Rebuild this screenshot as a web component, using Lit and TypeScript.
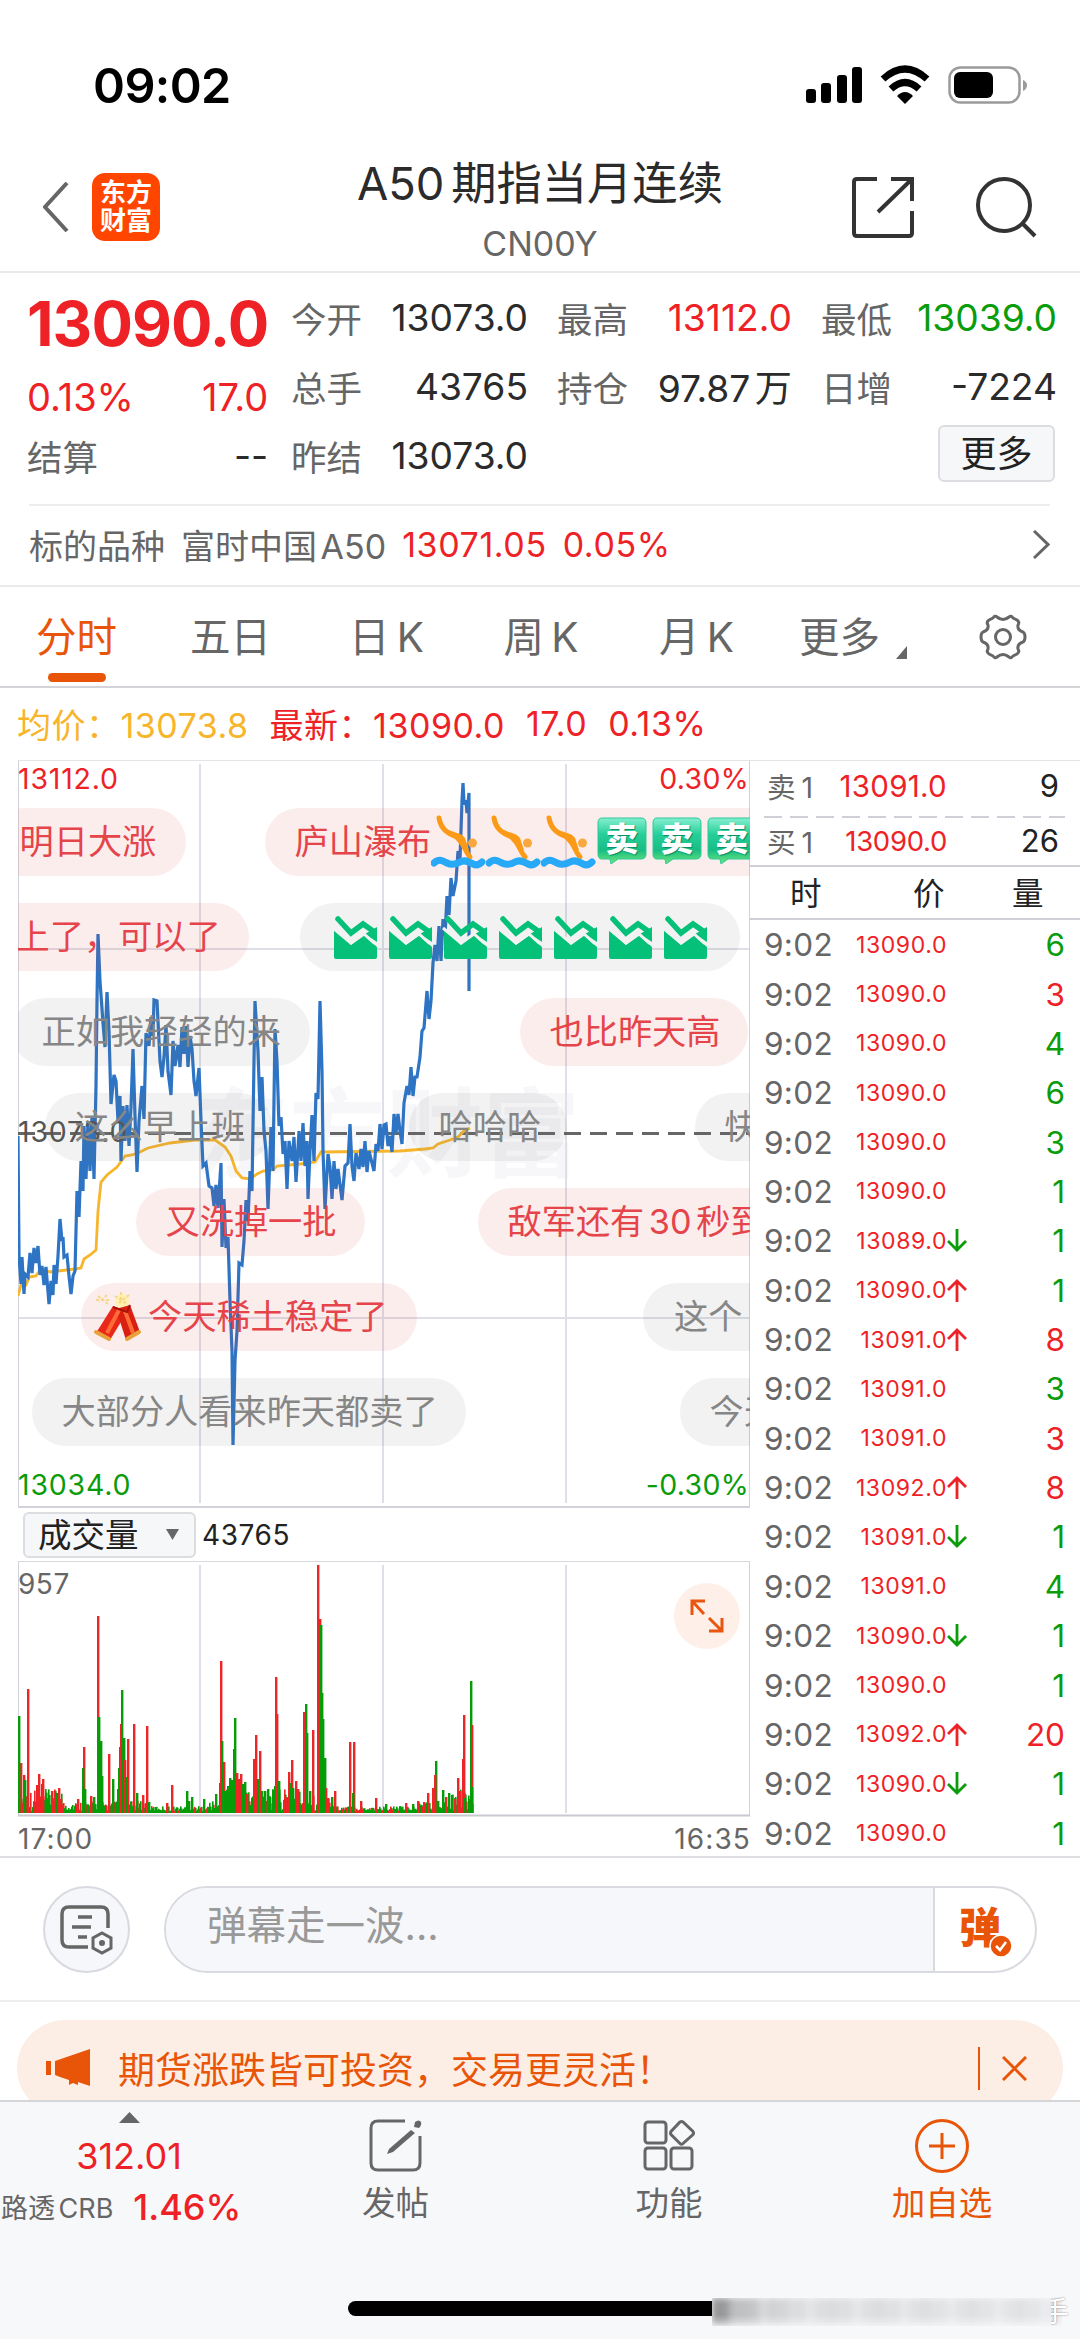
import { LitElement, html, svg, css } from "lit";
import { customElement, property } from "lit/decorators.js";
import { classMap } from "lit/directives/class-map.js";
import { styleMap } from "lit/directives/style-map.js";

type Point = [number, number];

interface Tick {
  price: string;
  volume: number;
  up: boolean;
  arrow?: "up" | "down";
}

interface Bubble {
  left: number;
  lane: number;
  text: string;
  tone: "red" | "gray";
  width?: number;
  pad?: number;
  before?: string[];
  after?: string[];
}

const TICKS: Tick[] = [
  { price: "13090.0", volume: 6, up: false },
  { price: "13090.0", volume: 3, up: true },
  { price: "13090.0", volume: 4, up: false },
  { price: "13090.0", volume: 6, up: false },
  { price: "13090.0", volume: 3, up: false },
  { price: "13090.0", volume: 1, up: false },
  { price: "13089.0", volume: 1, up: false, arrow: "down" },
  { price: "13090.0", volume: 1, up: false, arrow: "up" },
  { price: "13091.0", volume: 8, up: true, arrow: "up" },
  { price: "13091.0", volume: 3, up: false },
  { price: "13091.0", volume: 3, up: true },
  { price: "13092.0", volume: 8, up: true, arrow: "up" },
  { price: "13091.0", volume: 1, up: false, arrow: "down" },
  { price: "13091.0", volume: 4, up: false },
  { price: "13090.0", volume: 1, up: false, arrow: "down" },
  { price: "13090.0", volume: 1, up: false },
  { price: "13092.0", volume: 20, up: true, arrow: "up" },
  { price: "13090.0", volume: 1, up: false, arrow: "down" },
  { price: "13090.0", volume: 1, up: false },
];

// left is measured from the chart's left edge, lane counts from the top
const BUBBLES: Bubble[] = [
  { left: -28, lane: 0, text: "明日大涨", tone: "red", width: 196 },
  {
    left: 247,
    lane: 0,
    text: "庐山瀑布",
    tone: "red",
    after: ["dive", "dive", "dive", "sell", "sell", "sell"],
  },
  { left: -32, lane: 1, text: "上了，可以了", tone: "red", width: 263 },
  {
    left: 282,
    lane: 1,
    text: "",
    tone: "gray",
    width: 440,
    before: ["fall", "fall", "fall", "fall", "fall", "fall", "fall"],
  },
  { left: -6, lane: 2, text: "正如我轻轻的来", tone: "gray", width: 298 },
  { left: 502, lane: 2, text: "也比昨天高", tone: "red", width: 228 },
  { left: 27, lane: 3, text: "这么早上班", tone: "gray", width: 228 },
  { left: 391, lane: 3, text: "哈哈哈", tone: "gray", width: 158 },
  { left: 677, lane: 3, text: "快", tone: "gray", width: 158 },
  { left: 118, lane: 4, text: "又洗掉一批", tone: "red", width: 229 },
  { left: 460, lane: 4, text: "敌军还有 30 秒到", tone: "red" },
  {
    left: 63,
    lane: 5,
    text: "今天稀土稳定了",
    tone: "red",
    width: 336,
    pad: 12,
    before: ["cracker"],
  },
  { left: 625, lane: 5, text: "这个", tone: "gray", width: 200, pad: 31 },
  { left: 14, lane: 6, text: "大部分人看来昨天都卖了", tone: "gray", width: 434 },
  { left: 662, lane: 6, text: "今天", tone: "gray", width: 200 },
];

const PRICE: Point[] = [
  [18, 1135], [19, 1255], [21, 1283], [22, 1256], [24, 1293], [25, 1273],
  [28, 1276], [30, 1252], [32, 1272], [34, 1247], [36, 1262], [38, 1245],
  [40, 1274], [42, 1265], [44, 1284], [46, 1266], [49, 1303], [51, 1280],
  [53, 1294], [54, 1264], [56, 1283], [58, 1255], [60, 1218], [62, 1240],
  [63, 1236], [64, 1256], [67, 1254], [69, 1275], [71, 1293], [73, 1275],
  [75, 1270], [77, 1190], [79, 1216], [81, 1160], [83, 1190], [84, 1125],
  [86, 1178], [88, 1120], [90, 1170], [92, 1115], [94, 1178], [96, 1085],
  [97, 1000], [98, 933], [100, 980], [103, 1022], [105, 1046], [107, 991],
  [109, 1030], [111, 1103], [114, 1074], [116, 1080], [118, 1120], [120, 1095],
  [121, 1160], [123, 1105], [125, 1140], [127, 1104], [129, 1145], [131, 1106],
  [133, 1048], [135, 1115], [137, 1171], [139, 1120], [142, 1085], [144, 1118],
  [146, 1032], [149, 1045], [151, 1016], [153, 1035], [154, 999], [157, 1000],
  [160, 1060], [162, 1076], [164, 1056], [166, 1024], [168, 1070], [171, 1094],
  [173, 1040], [175, 1065], [178, 1044], [180, 1066], [182, 1026], [184, 1053],
  [186, 1025], [188, 1066], [190, 1035], [192, 1048], [194, 1080], [196, 1095],
  [199, 1067], [201, 1120], [203, 1165], [206, 1162], [209, 1185], [212, 1187],
  [214, 1205], [216, 1184], [218, 1207], [221, 1162], [222, 1246], [224, 1198],
  [226, 1247], [228, 1236], [230, 1300], [232, 1350], [233, 1444], [235, 1360],
  [237, 1330], [239, 1262], [242, 1264], [244, 1240], [246, 1199], [248, 1220],
  [250, 1170], [252, 1190], [254, 1060], [255, 1000], [258, 1050], [260, 1110],
  [262, 1076], [264, 1130], [266, 1150], [268, 1208], [271, 1126], [273, 1170],
  [275, 1028], [277, 1060], [279, 1125], [281, 1116], [283, 1153], [285, 1140],
  [287, 1188], [289, 1140], [292, 1160], [294, 1136], [296, 1181], [299, 1130],
  [301, 1160], [303, 1122], [305, 1165], [307, 1140], [308, 1198], [310, 1150],
  [312, 1114], [314, 1160], [316, 1092], [318, 1098], [320, 1000], [322, 1070],
  [323, 1150], [325, 1208], [328, 1153], [330, 1166], [332, 1198], [334, 1160],
  [336, 1188], [338, 1168], [342, 1199], [345, 1165], [348, 1162], [350, 1123],
  [352, 1165], [354, 1180], [356, 1152], [359, 1168], [361, 1148], [363, 1166],
  [365, 1140], [367, 1171], [369, 1150], [372, 1162], [374, 1170], [376, 1143],
  [378, 1150], [380, 1123], [382, 1148], [384, 1124], [386, 1123], [388, 1145],
  [390, 1135], [392, 1151], [394, 1113], [396, 1132], [398, 1113], [400, 1130],
  [402, 1143], [404, 1102], [407, 1085], [409, 1094], [411, 1066], [413, 1095],
  [415, 1076], [417, 1076], [420, 1056], [422, 1030], [424, 1027], [427, 990],
  [429, 1018], [431, 1000], [433, 962], [435, 944], [437, 960], [439, 925],
  [441, 960], [443, 918], [445, 935], [447, 895], [449, 914], [451, 877],
  [453, 895], [456, 880], [458, 850], [460, 858], [462, 800], [463, 782],
  [464, 802], [466, 801], [467, 812], [469, 792], [469, 990],
];

const AVERAGE: Point[] = [
  [18, 1295], [21, 1284], [26, 1284], [29, 1276], [36, 1275], [40, 1269],
  [45, 1269], [50, 1271], [58, 1270], [75, 1268], [81, 1267], [84, 1258],
  [90, 1254], [96, 1249], [98, 1210], [101, 1181], [107, 1174], [117, 1166],
  [125, 1155], [132, 1154], [140, 1151], [148, 1147], [170, 1142], [195, 1139],
  [215, 1139], [225, 1146], [231, 1155], [236, 1170], [242, 1177], [250, 1178],
  [257, 1173], [263, 1170], [273, 1169], [277, 1165], [300, 1163], [315, 1161],
  [321, 1151], [400, 1150], [425, 1148], [433, 1147], [438, 1143], [450, 1139],
  [458, 1136], [464, 1130], [470, 1127],
];

// x, height, rising
const VOLUMES: [number, number, boolean][] = [
  [21, 50, true], [24, 38, true], [25, 33, false], [28, 124, true],
  [37, 28, true], [39, 39, true], [42, 29, false], [43, 34, true],
  [52, 22, true], [57, 20, false], [59, 25, true], [61, 14, true],
  [78, 14, true], [84, 66, true], [83, 45, false], [85, 24, false],
  [91, 17, true], [94, 16, false], [98, 197, true], [99, 96, false],
  [101, 72, false], [102, 37, false], [109, 59, true], [113, 34, false],
  [118, 24, false], [119, 45, false], [120, 66, false], [121, 89, true],
  [122, 123, false], [124, 75, false], [125, 53, true], [126, 36, false],
  [128, 74, true], [134, 89, true], [137, 20, false], [143, 18, true],
  [147, 87, true], [149, 11, false], [167, 10, true], [172, 28, true],
  [187, 22, false], [189, 12, false], [192, 16, false], [204, 14, false],
  [216, 19, false], [220, 30, false], [221, 152, true], [222, 72, false],
  [224, 51, true], [225, 22, false], [228, 27, false], [230, 35, false],
  [232, 33, false], [234, 64, false], [235, 95, false], [236, 38, false],
  [237, 40, true], [239, 34, true], [241, 39, true], [243, 29, false],
  [245, 31, false], [247, 19, true], [254, 54, true], [256, 78, true],
  [258, 34, false], [260, 62, true], [262, 22, false], [265, 22, false],
  [268, 24, false], [270, 16, false], [275, 27, false], [276, 136, true],
  [277, 99, true], [279, 32, false], [289, 41, true], [290, 30, false],
  [292, 53, true], [293, 25, false], [296, 32, true], [298, 24, true],
  [304, 101, true], [306, 109, false], [307, 80, false], [310, 22, false],
  [313, 83, true], [318, 248, true], [320, 194, true], [321, 188, false],
  [322, 120, false], [323, 94, false], [325, 55, false], [326, 25, true],
  [328, 15, true], [332, 16, false], [335, 22, true], [350, 71, true],
  [354, 71, true], [353, 20, false], [361, 12, true], [376, 15, true],
  [386, 9, false], [406, 10, true], [413, 9, false], [418, 12, true],
  [424, 11, true], [428, 20, true], [433, 25, true], [436, 52, false],
  [435, 38, true], [438, 12, false], [443, 23, false], [446, 16, true],
  [449, 20, false], [452, 18, false], [455, 14, true], [458, 35, true],
  [460, 22, true], [463, 54, true], [464, 98, true], [465, 15, false],
  [471, 132, false], [472, 88, true], [472, 26, false], [19, 97, false],
];

const toPath = (points: Point[]) =>
  points.map(([x, y]) => `${x - 18},${y - 760}`).join(" ");

@customElement("emote-icon")
export class EmoteIcon extends LitElement {
  static styles = css`
    :host {
      display: block;
      width: 55px;
      height: 55px;
    }

    svg {
      display: block;
    }

    .sell {
      position: relative;
      width: 49px;
      height: 47px;
      margin: 2px 0 0 1px;
    }

    .sell span {
      position: absolute;
      inset: 0 0 6px;
      color: white;
      font: 900 33px/40px "Noto Sans CJK SC", sans-serif;
      text-align: center;
      text-shadow: 1px 1px 1px #078b63;
    }
  `;

  @property()
  name = "";

  render() {
    switch (this.name) {
      case "dive":
        return html`<svg width="55" height="55" viewBox="0 0 55 55">
          <path
            d="M8 3C10 15 18 19 26 22C33 28 33 35 39 42"
            fill="none"
            stroke="#fb9a17"
            stroke-width="5"
            stroke-linecap="round"
          />
          <path d="M14 13C21 18 30 17 34 23L38 35L34 35L25 25Z" fill="#fb9a17" />
          <circle cx="41.500" cy="28" r="4.500" fill="#f9a840" />
          <path
            d="M3 48C8 43 12 46 16 48S24 50 29 47S38 47 42 49S49 49 51 47"
            fill="none"
            stroke="#28a9f8"
            stroke-width="7"
            stroke-linecap="round"
          />
        </svg>`;
      case "sell":
        return html`<div class="sell">
          <svg width="50" height="49" viewBox="0 0 50 49">
            <defs>
              <linearGradient id="g" x1="0" y1="0" x2="0" y2="1">
                <stop offset="0" stop-color="#86efd0" />
                <stop offset=".35" stop-color="#27cf98" />
                <stop offset=".7" stop-color="#18bd84" />
                <stop offset="1" stop-color="#70e878" />
              </linearGradient>
            </defs>
            <path
              d="M5 1H44Q49 1 49 6V37Q49 42 44 42H21L14 47L13 42H5Q1 42 1 37V6Q1 1 5 1Z"
              fill="url(#g)"
              stroke="#2ac99a"
            />
          </svg>
          <span>卖</span>
        </div>`;
      case "fall":
        return html`<svg width="55" height="55" viewBox="0 0 55 55">
          <path
            d="M4 19L21 35L34 25L47 37V47Q47 49 45 49H6Q4 49 4 47Z"
            fill="#05c078"
          />
          <path
            d="M8 9L21 23L33 14L43 21"
            fill="none"
            stroke="#05c078"
            stroke-width="5.500"
            stroke-linecap="round"
          />
          <path d="M47 17V32L35 24Z" fill="#05c078" />
          <path
            d="M3 18L21 33L34 24L44 33L48 34"
            fill="none"
            stroke="#f2f2f2"
            stroke-width="3"
          />
        </svg>`;
      case "cracker":
        return html`<svg width="55" height="55" viewBox="0 0 55 55">
          <circle cx="29" cy="11" r="7" fill="#fff0ad" />
          <path
            d="M22 6L34 14M28 2V12M36 5L26 13M5 6L15 14M14 5L6 12M3 10H16"
            stroke="#f6d68c"
            stroke-width="2"
            stroke-dasharray="3 2"
          />
          <path d="M20 16L34 22L17 50L3 43Z" fill="#e9281a" />
          <path d="M23 19L37 15L47 42L33 50Z" fill="#d91e12" />
          <path d="M26 20L14 43M32 21L40 43" stroke="#ff6b36" stroke-width="4" />
          <path
            d="M3 42L16 49M34 49L46 42"
            stroke="#e9a13a"
            stroke-width="4"
            stroke-linecap="round"
          />
          <path d="M20 17L34 22L37 15" fill="none" stroke="#a81109" stroke-width="2" />
        </svg>`;
      default:
        return html``;
    }
  }
}

@customElement("price-chart")
export class PriceChart extends LitElement {
  static styles = css`
    :host {
      display: block;
    }

    .chart {
      position: relative;
      width: 732px;
      height: 747px;
      overflow: hidden;
    }

    .plot {
      display: block;
    }

    .watermark {
      font: bold 97px "Noto Sans CJK SC", sans-serif;
      fill: #f7f7f9;
    }

    .label {
      position: absolute;
      font-size: 28.5px;
      line-height: 34px;
      letter-spacing: 0.8px;
    }

    .top {
      top: 1px;
    }

    .middle {
      top: 354px;
      color: #555;
    }

    .bottom {
      bottom: 6px;
    }

    .left {
      left: 0;
    }

    .right {
      right: 1px;
      letter-spacing: 0.3px;
    }

    .red {
      color: #ee2226;
    }

    .green {
      color: #0a9c0a;
    }

    .bubble {
      position: absolute;
      box-sizing: border-box;
      display: flex;
      align-items: center;
      height: 68px;
      padding: 0 30px;
      border-radius: 34px;
      font-size: 34.2px;
      line-height: 68px;
      white-space: nowrap;
      word-spacing: -5px;
    }

    .bubble.red {
      color: #e5444a;
      background: rgba(226, 50, 50, 0.09);
    }

    .bubble.gray {
      color: #868686;
      background: rgba(100, 100, 100, 0.085);
    }

    emote-icon {
      flex: none;
    }
  `;

  private _bubble(b: Bubble) {
    const box = {
      left: `${b.left}px`,
      top: `${47 + b.lane * 95}px`,
      width: b.width ? `${b.width}px` : "auto",
      "padding-left": `${b.pad ?? 29.5}px`,
    };
    return html`<div
      class="bubble ${classMap({ red: b.tone === "red", gray: b.tone === "gray" })}"
      style=${styleMap(box)}
    >
      ${(b.before ?? []).map((n) => html`<emote-icon name=${n}></emote-icon>`)}${b.text}${(
        b.after ?? []
      ).map((n) => html`<emote-icon name=${n}></emote-icon>`)}
    </div>`;
  }

  render() {
    return html`
      <div class="chart">
        <svg class="plot" width="732" height="747" viewBox="0 0 732 747">
          <text class="watermark" x="174" y="408">东方财富</text>
          <path
            d="M182 3V742M365 3V742M548 3V742M0 188H731M0 557H731"
            stroke="#dfe0e7"
            stroke-width="2"
          />
          <path d="M.5 0V746M731.500 0V746" stroke="#d2d3da" />
          <path d="M0 746H732" stroke="#d2d3da" stroke-width="2" />
          <path
            d="M0 372.500H731"
            stroke="#666"
            stroke-width="2.800"
            stroke-dasharray="17 9"
          />
          <polyline
            points=${toPath(AVERAGE)}
            fill="none"
            stroke="#f7b52c"
            stroke-width="2.800"
          />
          <polyline
            points=${toPath(PRICE)}
            fill="none"
            stroke="#2e74c4"
            stroke-width="3.200"
          />
        </svg>
        <div class="label middle left">13073.0</div>
        ${BUBBLES.map((b) => this._bubble(b))}
        <div class="label top left red">13112.0</div>
        <div class="label top right red">0.30%</div>
        <div class="label bottom left green">13034.0</div>
        <div class="label bottom right green">-0.30%</div>
      </div>
    `;
  }
}

@customElement("volume-chart")
export class VolumeChart extends LitElement {
  static styles = css`
    :host {
      display: block;
    }

    .head {
      display: flex;
      align-items: center;
      height: 53px;
      padding-left: 5px;
      color: #222;
      font-size: 28px;
      letter-spacing: 0.6px;
      border-bottom: 1px solid #d8d9df;
    }

    .picker {
      box-sizing: border-box;
      display: flex;
      align-items: center;
      justify-content: space-between;
      width: 173px;
      height: 46px;
      margin-right: 6px;
      padding: 0 15px 0 13px;
      font-size: 33.5px;
      line-height: 42px;
      letter-spacing: 0;
      background: #f6f7f9;
      border: 2px solid #dcdde1;
      border-radius: 6px;
    }

    .plot {
      position: relative;
      height: 255px;
    }

    .max {
      position: absolute;
      top: 5px;
      left: 0;
      color: #666;
      font-size: 28px;
      line-height: 34px;
      letter-spacing: 0.5px;
    }

    .expand {
      position: absolute;
      top: 21px;
      right: 10px;
      display: flex;
      align-items: center;
      justify-content: center;
      width: 66px;
      height: 66px;
      border-radius: 50%;
      background: #feefe8;
    }

    .times {
      display: flex;
      justify-content: space-between;
      height: 40px;
      margin-right: -1px;
      color: #666;
      font-size: 28px;
      line-height: 45px;
      letter-spacing: 1.1px;
    }

    svg {
      display: block;
    }
  `;

  // small trades that fill the floor between the listed bars
  private _floor() {
    const bars = [];
    for (let x = 1; x < 455; x += 1) {
      const busy = x < 45 || (x > 200 && x < 312) || x > 425;
      const quiet = (x > 130 && x < 190) || (x > 312 && x < 400);
      const noise = Math.abs(Math.sin(x * 12.9898) * 43758.5453) % 1;
      const height = 2 + noise * (busy ? 22 : quiet ? 5 : 10);
      const rising = (x * 7 + Math.floor(noise * 10)) % 10 < 3;
      bars.push(
        svg`<rect x=${x} y=${251 - height} width="1.600" height=${height} fill=${rising ? "#ed2526" : "#069c08"} />`
      );
    }
    return bars;
  }

  render() {
    return html`
      <div class="head">
        <div class="picker">
          成交量
          <svg width="13" height="11" viewBox="0 0 13 11">
            <path d="M0 0H13L6.500 11Z" fill="#666" />
          </svg>
        </div>
        43765
      </div>
      <div class="plot">
        <svg width="732" height="255" viewBox="0 0 732 255">
          <path
            d="M182 3V251M365 3V251M548 3V251"
            stroke="#dfe0e7"
            stroke-width="2"
          />
          <path d="M.5 0V254M731.500 0V254" stroke="#d2d3da" />
          <path d="M0 253.500H732" stroke="#c9cad1" stroke-width="2" />
          ${this._floor()}
          ${VOLUMES.map(
            ([x, h, rising]) =>
              svg`<rect x=${x - 19} y=${251 - h} width="2.400" height=${h} fill=${rising ? "#ed2526" : "#069c08"} />`
          )}
        </svg>
        <div class="max">957</div>
        <div class="expand">
          <svg width="36" height="36" viewBox="0 0 36 36">
            <path
              d="M3 17V3H16M4 4L15 16M33 20V33H20M20 20L32 32"
              fill="none"
              stroke="#e8560f"
              stroke-width="3"
            />
          </svg>
        </div>
      </div>
      <div class="times"><span>17:00</span><span>16:35</span></div>
    `;
  }
}

@customElement("order-book")
export class OrderBook extends LitElement {
  static styles = css`
    :host {
      display: block;
      box-sizing: border-box;
      color: #222;
    }

    .quote {
      display: grid;
      grid-template-columns: 70px 110px 1fr;
      align-items: center;
      box-sizing: border-box;
      height: 56px;
      padding: 0 21px 6px 17px;
      font-size: 29.5px;
      border-top: 1px solid #e4e4e8;
    }

    .bid {
      height: 47px;
      padding-bottom: 2px;
      border: 0;
    }

    .bid .price {
      font-size: 27.5px;
      letter-spacing: -0.3px;
    }

    .side {
      color: #666;
      font-size: 28.5px;
      word-spacing: -2px;
    }

    .price {
      color: #ee2226;
      text-align: right;
      letter-spacing: 0.3px;
    }

    .size {
      text-align: right;
      font-size: 31px;
    }

    .dash {
      height: 2px;
      margin: 0 15px 0 14px;
      background: repeating-linear-gradient(
        to right,
        #cfd0d7 0 18px,
        transparent 18px 25.9px
      );
    }

    .head {
      display: grid;
      grid-template-columns: 123px 99px 1fr;
      box-sizing: border-box;
      height: 55px;
      padding-left: 40px;
      font-size: 31.5px;
      line-height: 54px;
      border-top: 2px solid #cfd0d7;
      border-bottom: 2px solid #cfd0d7;
    }

    .tick {
      display: grid;
      grid-template-columns: 75px 108px 1fr auto;
      align-items: center;
      height: 49.36px;
      padding: 0 15px 0 14px;
      font-size: 31.5px;
    }

    .time {
      color: #666;
      letter-spacing: 0.3px;
    }

    .tick .price {
      font-size: 23px;
      letter-spacing: 0.6px;
    }

    .up {
      color: #ee2226;
    }

    .down {
      color: #0a9c0a;
    }

    .arrow {
      display: block;
      fill: none;
      stroke: currentColor;
      stroke-width: 2.8;
    }
  `;

  private _arrow(direction?: "up" | "down") {
    if (!direction) return html`<span></span>`;
    const d = direction === "up" ? "M10 23V2M1 11L10 2L19 11" : "M10 0V21M1 12L10 21L19 12";
    return html`<svg class="arrow ${direction}" width="20" height="23" viewBox="0 0 20 23">
      <path d=${d} />
    </svg>`;
  }

  render() {
    return html`
      <div class="quote">
        <span class="side">卖 1</span>
        <span class="price">13091.0</span>
        <span class="size">9</span>
      </div>
      <div class="dash"></div>
      <div class="quote bid">
        <span class="side">买 1</span>
        <span class="price">13090.0</span>
        <span class="size">26</span>
      </div>
      <div class="head"><span>时</span><span>价</span><span>量</span></div>
      ${TICKS.map(
        (tick) => html`
          <div class="tick">
            <span class="time">9:02</span>
            <span class="price">${tick.price}</span>
            ${this._arrow(tick.arrow)}
            <span class=${tick.up ? "up" : "down"}>${tick.volume}</span>
          </div>
        `
      )}
    `;
  }
}

@customElement("app-root")
export class AppRoot extends LitElement {
  static styles = css`
    :host {
      display: block;
      width: 1080px;
      height: 2339px;
      overflow: hidden;
      background: white;
      color: #2b2b2b;
      font-family: Inter, "Noto Sans CJK SC", sans-serif;
      white-space: nowrap;
    }

    svg {
      display: block;
      flex: none;
    }

    .red {
      color: #ee2226;
    }

    .green {
      color: #0a9c0a;
    }

    .status {
      display: flex;
      justify-content: space-between;
      align-items: center;
      height: 140px;
      padding: 30px 53px 0 93px;
      box-sizing: border-box;
      color: black;
      font-size: 48.5px;
      font-weight: 600;
      letter-spacing: -0.6px;
    }

    .header {
      display: grid;
      grid-template-columns: 160px 1fr 160px;
      align-items: center;
      box-sizing: border-box;
      height: 133px;
      padding: 0 43px;
      border-bottom: 2px solid #ebebeb;
    }

    .nav,
    .tools {
      display: flex;
      align-items: center;
    }

    .nav {
      gap: 23px;
    }

    .tools {
      justify-content: flex-end;
      gap: 62px;
    }

    .logo {
      width: 68px;
      height: 68px;
      box-sizing: border-box;
      padding-top: 6px;
      border-radius: 13px;
      background: #ff4500;
      color: white;
      font-size: 26px;
      font-weight: bold;
      line-height: 28px;
      text-align: center;
    }

    .title {
      text-align: center;
      font-size: 45.3px;
      line-height: 60px;
      padding-top: 14px;
      word-spacing: -6px;
    }

    .code {
      color: #666;
      font-size: 34px;
      line-height: 60px;
    }

    .stats {
      display: grid;
      grid-template-columns: 235px 237px 235px 236px;
      column-gap: 29px;
      height: 231px;
      padding: 10px 0 0 27px;
      box-sizing: border-box;
      font-size: 37.2px;
    }

    .col {
      display: grid;
      grid-auto-rows: 69.3px;
      align-items: center;
    }

    .cell {
      display: flex;
      align-items: center;
      justify-content: space-between;
      word-spacing: -6px;
      padding-bottom: 1px;
    }

    .cell span:first-child {
      color: #666;
      font-size: 35.5px;
    }

    .cell span.red:first-child {
      color: #ee2226;
      font-size: 38px;
    }

    .cell.change {
      font-size: 38px;
      padding-top: 22px;
    }

    .last {
      color: #ee2226;
      font-size: 61.5px;
      font-weight: 700;
      letter-spacing: -0.9px;
      padding-top: 11px;
    }

    .button {
      box-sizing: border-box;
      justify-self: end;
      width: 117px;
      height: 57px;
      margin: -5px 2px 0 0;
      border: 2px solid #dcdde1;
      border-radius: 6px;
      background: #f6f7f9;
      color: #222;
      font-size: 36px;
      line-height: 54px;
      text-align: center;
    }

    .underlying {
      display: flex;
      align-items: center;
      box-sizing: border-box;
      height: 81px;
      margin: 0 30px 0 29px;
      padding-bottom: 2px;
      border-top: 2px solid #ededed;
      color: #666;
      font-size: 34px;
      gap: 16px;
      word-spacing: -6px;
    }

    .underlying .red {
      letter-spacing: 0.6px;
    }

    .underlying svg {
      margin-left: auto;
    }

    .tabs {
      display: grid;
      grid-template-columns: 153px 155px 157px 152px 159px 146px 1fr;
      box-sizing: border-box;
      height: 103px;
      border-top: 2px solid #ebebeb;
      border-bottom: 2px solid #d4d4d8;
      color: #666;
      font-size: 40.5px;
      line-height: 101px;
      text-align: center;
      word-spacing: -4px;
    }

    .active {
      position: relative;
      color: #e85508;
    }

    .active::after {
      content: "";
      position: absolute;
      left: 48px;
      bottom: 6px;
      width: 58px;
      height: 9px;
      border-radius: 4.5px;
      background: #e85508;
    }

    .more {
      display: flex;
      align-items: center;
      justify-content: center;
      gap: 16px;
      padding-left: 8px;
    }

    .more svg {
      margin-top: 30px;
    }

    .gear {
      align-self: center;
      margin: -2px 0 0 57px;
    }

    .summary {
      display: flex;
      align-items: center;
      height: 72px;
      padding: 0 0 2px 17px;
      box-sizing: border-box;
      color: #ee2226;
      font-size: 34px;
      letter-spacing: 0.5px;
      gap: 21px;
    }

    .average {
      color: #f7b52c;
    }

    .market {
      display: grid;
      grid-template-columns: 732px 1fr;
      box-sizing: border-box;
      height: 1098px;
      padding-left: 18px;
      border-bottom: 2px solid #dfe0e4;
    }

    .charts {
      border-top: 1px solid #e4e4e8;
    }

    .compose {
      display: flex;
      align-items: center;
      box-sizing: border-box;
      height: 144px;
      padding: 1px 43px 0;
      gap: 34px;
      border-bottom: 2px solid #eeeef0;
    }

    .round {
      display: flex;
      align-items: center;
      justify-content: center;
      box-sizing: border-box;
      width: 87px;
      height: 87px;
      border: 2px solid #d9dae0;
      border-radius: 50%;
      background: #f6f7fa;
    }

    .input {
      display: flex;
      flex: 1;
      box-sizing: border-box;
      height: 87px;
      border: 2px solid #d9dae0;
      border-radius: 44px;
      overflow: hidden;
      color: #999;
      font-size: 39.5px;
      line-height: 76px;
    }

    .placeholder {
      flex: 1;
      padding-left: 41px;
      background: #f6f7fa;
    }

    .danmu {
      position: relative;
      width: 76px;
      padding-left: 24px;
      border-left: 2px solid #d9dae0;
      color: #e85508;
      font-size: 42px;
      font-weight: 900;
      line-height: 80px;
    }

    .danmu svg {
      position: absolute;
      left: 54px;
      top: 46px;
    }

    .promo {
      height: 98px;
      padding: 18px 17px 0;
      overflow: hidden;
      box-sizing: border-box;
    }

    .banner {
      display: flex;
      align-items: center;
      height: 96px;
      padding: 0 36px 0 29px;
      box-sizing: border-box;
      border-radius: 48px;
      background: #fdeee5;
      color: #e85508;
      font-size: 37px;
      gap: 28px;
    }

    .close {
      display: flex;
      align-items: center;
      gap: 23px;
      height: 43px;
      margin-left: auto;
      padding-left: 22px;
      border-left: 2px solid #e85508;
    }

    .footer {
      display: grid;
      grid-template-columns: 259px 273px 274px 272px;
      box-sizing: border-box;
      height: 240px;
      align-content: start;
      border-top: 2px solid #d5d6da;
      background: #f7f8fa;
      color: #666;
    }

    .index {
      font-size: 36px;
      padding-top: 10px;
    }

    .index .caret {
      margin-left: 119px;
    }

    .index .value {
      width: 259px;
      box-sizing: border-box;
      padding-right: 1px;
      text-align: center;
      line-height: 66px;
    }

    .pair {
      display: flex;
      align-items: center;
      gap: 20px;
      height: 35px;
      margin-left: 1px;
      word-spacing: -4px;
    }

    .pair small {
      font-size: 27px;
    }

    .pair b {
      color: #ee2226;
      font-weight: 500;
      font-size: 36px;
    }

    .action {
      display: flex;
      flex-direction: column;
      align-items: center;
      padding-top: 17px;
      font-size: 33.5px;
      line-height: 61px;
    }

    .orange {
      color: #e85508;
    }

    .home {
      position: absolute;
      top: 2301px;
      left: 348px;
      width: 364px;
      height: 15px;
      border-radius: 8px 0 0 8px;
      background: black;
    }

    .smudge {
      position: absolute;
      top: 2298px;
      left: 712px;
      width: 350px;
      height: 28px;
      filter: blur(3px);
      background: repeating-linear-gradient(
          to right,
          rgba(255, 255, 255, 0.25) 0 9px,
          transparent 9px 21px,
          rgba(205, 206, 209, 0.2) 21px 30px,
          transparent 30px 47px
        ),
        linear-gradient(to right, #606060, #b9babc 20px, #dcdddf 80px, #e6e7e9);
      -webkit-mask-image: linear-gradient(black 60%, rgba(0, 0, 0, 0.45));
    }

    .mark {
      position: absolute;
      top: 2294px;
      left: 1051px;
      width: 18px;
      overflow: hidden;
      color: white;
      font-size: 28px;
      line-height: 36px;
      text-shadow: 0 0 2px #777;
      direction: rtl;
    }
  `;

  private _cell(label: string, value: string, tone = "") {
    return html`<div class="cell"><span>${label}</span><span class=${tone}>${value}</span></div>`;
  }

  render() {
    return html`
      <div class="status">
        <span>09:02</span>
        <svg width="222" height="40" viewBox="0 0 222 40">
          <rect x="1" y="24" width="10" height="14" rx="3" />
          <rect x="16" y="18" width="10" height="20" rx="3" />
          <rect x="32" y="10" width="10" height="28" rx="3" />
          <rect x="47" y="2" width="10" height="36" rx="3" />
          <g fill="none" stroke="black" stroke-width="7">
            <path d="M78 14Q100 -6 122 14" />
            <path d="M86 24Q100 11 114 24" />
          </g>
          <path d="M92 31Q100 23 108 31L100 39Z" />
          <rect
            x="144.500"
            y="2.500"
            width="70"
            height="35"
            rx="11"
            fill="none"
            stroke="#9b9b9b"
            stroke-width="2.500"
          />
          <rect x="149" y="7" width="39" height="26" rx="6" />
          <path d="M218 15Q222 17 222 20Q222 24 218 26Z" fill="#9b9b9b" />
        </svg>
      </div>
      <div class="header">
        <div class="nav">
          <svg width="26" height="50" viewBox="0 0 26 50">
            <path d="M24 1L2 25L24 49" fill="none" stroke="#666" stroke-width="4" />
          </svg>
          <div class="logo">东方<br />财富</div>
        </div>
        <div class="title">
          A50 期指当月连续
          <div class="code">CN00Y</div>
        </div>
        <div class="tools">
          <svg width="62" height="61" viewBox="0 0 62 61">
            <path
              d="M25 2H5Q2 2 2 5V56Q2 59 5 59H57Q60 59 60 56V34M39 2H60V24M60 2L26 35"
              fill="none"
              stroke="#333"
              stroke-width="4"
            />
          </svg>
          <svg width="61" height="61" viewBox="0 0 61 61">
            <circle cx="28" cy="28" r="26" fill="none" stroke="#333" stroke-width="4" />
            <path d="M47 47L59 59" stroke="#333" stroke-width="4" />
          </svg>
        </div>
      </div>
      <div class="stats">
        <div class="col">
          <div class="last">13090.0</div>
          <div class="cell change red"><span class="red">0.13%</span><span>17.0</span></div>
          ${this._cell("结算", "--")}
        </div>
        <div class="col">
          ${this._cell("今开", "13073.0")} ${this._cell("总手", "43765")}
          ${this._cell("昨结", "13073.0")}
        </div>
        <div class="col">
          ${this._cell("最高", "13112.0", "red")} ${this._cell("持仓", "97.87 万")}
        </div>
        <div class="col">
          ${this._cell("最低", "13039.0", "green")} ${this._cell("日增", "-7224")}
          <div class="button">更多</div>
        </div>
      </div>
      <div class="underlying">
        <span>标的品种</span>
        <span>富时中国 A50</span>
        <span class="red">13071.05</span>
        <span class="red">0.05%</span>
        <svg width="17" height="29" viewBox="0 0 17 29">
          <path d="M1 1L15 14.500L1 28" fill="none" stroke="#666" stroke-width="3" />
        </svg>
      </div>
      <div class="tabs">
        <div class="active">分时</div>
        <div>五日</div>
        <div>日 K</div>
        <div>周 K</div>
        <div>月 K</div>
        <div class="more">
          更多
          <svg width="11" height="13" viewBox="0 0 11 13">
            <path d="M11 0V13H0Z" fill="#666" />
          </svg>
        </div>
        <svg class="gear" width="48" height="46" viewBox="0 0 48 46">
          <path
            d="M14 4Q16 1 18 3Q24 8 30 3Q32 1 34 4L38 6Q41 8 39 11Q38 16 44 18Q46 19 46 23Q46 27 44 28Q38 30 39 35Q41 38 38 40L34 42Q32 45 30 43Q24 38 18 43Q16 45 14 42L10 40Q7 38 9 35Q10 30 4 28Q2 27 2 23Q2 19 4 18Q10 16 9 11Q7 8 10 6Z"
            fill="none"
            stroke="#666"
            stroke-width="3"
            stroke-linejoin="round"
          />
          <circle cx="24" cy="23" r="7.500" fill="none" stroke="#666" stroke-width="3" />
        </svg>
      </div>
      <div class="summary">
        <span class="average">均价：13073.8</span>
        <span>最新：13090.0</span>
        <span>17.0</span>
        <span>0.13%</span>
      </div>
      <div class="market">
        <div class="charts">
          <price-chart></price-chart>
          <volume-chart></volume-chart>
        </div>
        <order-book></order-book>
      </div>
      <div class="compose">
        <div class="round">
          <svg width="54" height="50" viewBox="0 0 54 50">
            <g fill="none" stroke="#666" stroke-width="3.500">
              <path d="M28 42H9Q2 42 2 35V9Q2 2 9 2H41Q48 2 48 9V23" />
              <path d="M18 12H32M12 22H31M18 32H27" />
              <path d="M42 28L51 33V43L42 48L33 43V33Z" stroke-width="3" />
            </g>
            <circle cx="42" cy="38" r="3" fill="#666" />
          </svg>
        </div>
        <div class="input">
          <div class="placeholder">弹幕走一波...</div>
          <div class="danmu">
            弹
            <svg width="24" height="24" viewBox="0 0 24 24">
              <circle cx="12" cy="12" r="11" fill="#e85508" stroke="white" stroke-width="1.500" />
              <path d="M7 12L11 16L17 8" fill="none" stroke="white" stroke-width="2.500" />
            </svg>
          </div>
        </div>
      </div>
      <div class="promo">
        <div class="banner">
          <svg width="44" height="38" viewBox="0 0 44 38">
            <path d="M0 12H5V26H0ZM9 12L44 0V37L32 33V36L27 34L23 36V31L14 28L9 26Z" fill="#e85508" />
          </svg>
          期货涨跌皆可投资，交易更灵活！
          <div class="close">
            <svg width="25" height="25" viewBox="0 0 25 25">
              <path d="M1 1L24 24M24 1L1 24" stroke="#e85508" stroke-width="3" />
            </svg>
          </div>
        </div>
      </div>
      <div class="footer">
        <div class="index">
          <svg class="caret" width="21" height="11" viewBox="0 0 21 11">
            <path d="M10.500 0L21 11H0Z" fill="#666" />
          </svg>
          <div class="value red">312.01</div>
          <div class="pair"><small>路透 CRB</small><b>1.46%</b></div>
        </div>
        <div class="action">
          <svg width="54" height="54" viewBox="0 0 54 54">
            <path
              d="M36 2H9Q2 2 2 9V44Q2 51 9 51H44Q51 51 51 44V17"
              fill="none"
              stroke="#666"
              stroke-width="3"
            />
            <path d="M46 3Q50 0 52 3Q53 6 50 9L45 8ZM42 11L46 14L24 33L18 35L20 30Z" fill="#666" />
          </svg>
          发帖
        </div>
        <div class="action">
          <svg width="52" height="54" viewBox="0 0 52 54">
            <g fill="none" stroke="#666" stroke-width="3">
              <rect x="2" y="3" width="21" height="21" rx="3" />
              <rect x="2" y="29" width="21" height="21" rx="3" />
              <rect x="28" y="29" width="21" height="21" rx="3" />
              <path
                d="M37 3Q38.500 2 40 3L50 12.500Q51 14 50 15.500L40 24.500Q38.500 26 37 24.500L28 15.500Q27 14 28 12.500Z"
              />
            </g>
          </svg>
          功能
        </div>
        <div class="action orange">
          <svg width="54" height="54" viewBox="0 0 54 54">
            <circle cx="27" cy="27" r="25.500" fill="none" stroke="#e85508" stroke-width="3" />
            <path d="M27 14V40M14 27H40" stroke="#e85508" stroke-width="3" />
          </svg>
          加自选
        </div>
      </div>
      <div class="home"></div>
      <div class="smudge"></div>
      <div class="mark">手</div>
    `;
  }
}
